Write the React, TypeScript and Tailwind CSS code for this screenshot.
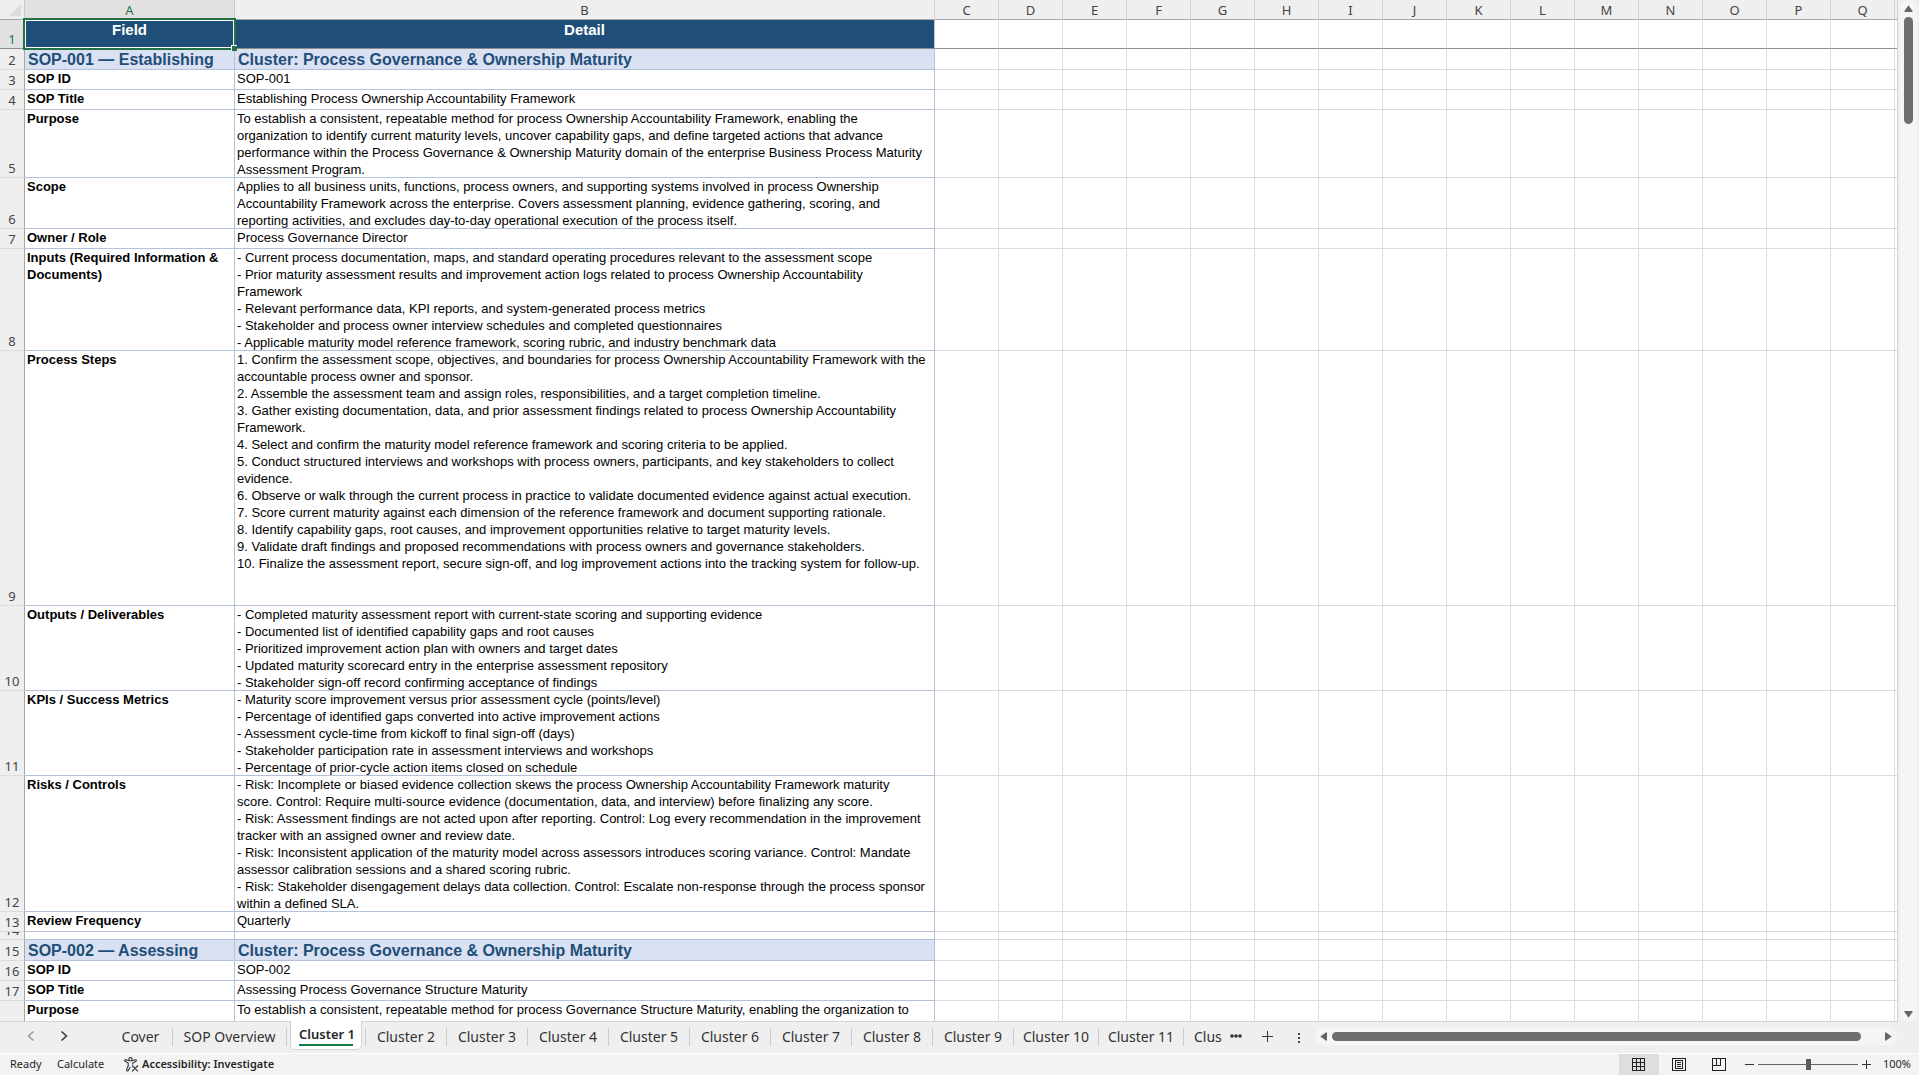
import { clsx } from "clsx";
import { Fragment } from "react";

type Row = {
  n: number;
  height: string;
  field: string;
  detail: string[];
  kind?: "head" | "title";
};

const columns = ["C", "D", "E", "F", "G", "H", "I", "J", "K", "L", "M", "N", "O", "P", "Q"];

const rows: Row[] = [
  { n: 1, height: "h-[29px]", field: "Field", detail: ["Detail"], kind: "head" },
  {
    n: 2,
    height: "h-[21px]",
    field: "SOP-001 — Establishing",
    detail: ["Cluster: Process Governance & Ownership Maturity"],
    kind: "title",
  },
  { n: 3, height: "h-[20px]", field: "SOP ID", detail: ["SOP-001"] },
  {
    n: 4,
    height: "h-[20px]",
    field: "SOP Title",
    detail: ["Establishing Process Ownership Accountability Framework"],
  },
  {
    n: 5,
    height: "h-[68px]",
    field: "Purpose",
    detail: [
      "To establish a consistent, repeatable method for process Ownership Accountability Framework, enabling the",
      "organization to identify current maturity levels, uncover capability gaps, and define targeted actions that advance",
      "performance within the Process Governance & Ownership Maturity domain of the enterprise Business Process Maturity",
      "Assessment Program.",
    ],
  },
  {
    n: 6,
    height: "h-[51px]",
    field: "Scope",
    detail: [
      "Applies to all business units, functions, process owners, and supporting systems involved in process Ownership",
      "Accountability Framework across the enterprise. Covers assessment planning, evidence gathering, scoring, and",
      "reporting activities, and excludes day-to-day operational execution of the process itself.",
    ],
  },
  { n: 7, height: "h-[20px]", field: "Owner / Role", detail: ["Process Governance Director"] },
  {
    n: 8,
    height: "h-[102px]",
    field: "Inputs (Required Information & Documents)",
    detail: [
      "- Current process documentation, maps, and standard operating procedures relevant to the assessment scope",
      "- Prior maturity assessment results and improvement action logs related to process Ownership Accountability",
      "Framework",
      "- Relevant performance data, KPI reports, and system-generated process metrics",
      "- Stakeholder and process owner interview schedules and completed questionnaires",
      "- Applicable maturity model reference framework, scoring rubric, and industry benchmark data",
    ],
  },
  {
    n: 9,
    height: "h-[255px]",
    field: "Process Steps",
    detail: [
      "1. Confirm the assessment scope, objectives, and boundaries for process Ownership Accountability Framework with the",
      "accountable process owner and sponsor.",
      "2. Assemble the assessment team and assign roles, responsibilities, and a target completion timeline.",
      "3. Gather existing documentation, data, and prior assessment findings related to process Ownership Accountability",
      "Framework.",
      "4. Select and confirm the maturity model reference framework and scoring criteria to be applied.",
      "5. Conduct structured interviews and workshops with process owners, participants, and key stakeholders to collect",
      "evidence.",
      "6. Observe or walk through the current process in practice to validate documented evidence against actual execution.",
      "7. Score current maturity against each dimension of the reference framework and document supporting rationale.",
      "8. Identify capability gaps, root causes, and improvement opportunities relative to target maturity levels.",
      "9. Validate draft findings and proposed recommendations with process owners and governance stakeholders.",
      "10. Finalize the assessment report, secure sign-off, and log improvement actions into the tracking system for follow-up.",
    ],
  },
  {
    n: 10,
    height: "h-[85px]",
    field: "Outputs / Deliverables",
    detail: [
      "- Completed maturity assessment report with current-state scoring and supporting evidence",
      "- Documented list of identified capability gaps and root causes",
      "- Prioritized improvement action plan with owners and target dates",
      "- Updated maturity scorecard entry in the enterprise assessment repository",
      "- Stakeholder sign-off record confirming acceptance of findings",
    ],
  },
  {
    n: 11,
    height: "h-[85px]",
    field: "KPIs / Success Metrics",
    detail: [
      "- Maturity score improvement versus prior assessment cycle (points/level)",
      "- Percentage of identified gaps converted into active improvement actions",
      "- Assessment cycle-time from kickoff to final sign-off (days)",
      "- Stakeholder participation rate in assessment interviews and workshops",
      "- Percentage of prior-cycle action items closed on schedule",
    ],
  },
  {
    n: 12,
    height: "h-[136px]",
    field: "Risks / Controls",
    detail: [
      "- Risk: Incomplete or biased evidence collection skews the process Ownership Accountability Framework maturity",
      "score. Control: Require multi-source evidence (documentation, data, and interview) before finalizing any score.",
      "- Risk: Assessment findings are not acted upon after reporting. Control: Log every recommendation in the improvement",
      "tracker with an assigned owner and review date.",
      "- Risk: Inconsistent application of the maturity model across assessors introduces scoring variance. Control: Mandate",
      "assessor calibration sessions and a shared scoring rubric.",
      "- Risk: Stakeholder disengagement delays data collection. Control: Escalate non-response through the process sponsor",
      "within a defined SLA.",
    ],
  },
  { n: 13, height: "h-[20px]", field: "Review Frequency", detail: ["Quarterly"] },
  { n: 14, height: "h-[8px]", field: "", detail: [] },
  {
    n: 15,
    height: "h-[21px]",
    field: "SOP-002 — Assessing",
    detail: ["Cluster: Process Governance & Ownership Maturity"],
    kind: "title",
  },
  { n: 16, height: "h-[20px]", field: "SOP ID", detail: ["SOP-002"] },
  {
    n: 17,
    height: "h-[20px]",
    field: "SOP Title",
    detail: ["Assessing Process Governance Structure Maturity"],
  },
  {
    n: 18,
    height: "h-[68px]",
    field: "Purpose",
    detail: [
      "To establish a consistent, repeatable method for process Governance Structure Maturity, enabling the organization to",
    ],
  },
];

const sheets = [
  "Cover",
  "SOP Overview",
  "Cluster 1",
  "Cluster 2",
  "Cluster 3",
  "Cluster 4",
  "Cluster 5",
  "Cluster 6",
  "Cluster 7",
  "Cluster 8",
  "Cluster 9",
  "Cluster 10",
  "Cluster 11",
];

function SheetRow({ row }: { row: Row }) {
  const head = row.kind === "head";
  const title = row.kind === "title";
  const cell = clsx(
    "border-r border-b p-0 align-top",
    head && "border-b-[#8c8c8c] bg-[#1f4e78] text-center text-[15px] font-bold leading-[20px] text-white",
    title && "border-[#b4c1dc] bg-[#d9e1f2] text-left text-base font-bold leading-[22px] text-[#1f4e78]",
    !row.kind && "border-[#b4c1dc] text-left text-[13px] leading-[17px] text-black"
  );
  // the last text line may touch the rule below it, so it gives back its border pixels
  const inner = clsx(title ? "-mb-[2px] px-[3px]" : "-mb-px px-[2px]");

  return (
    <tr className={row.height}>
      <th
        scope="row"
        className={clsx(
          "border-r border-r-[#a6a6a6] border-b p-0 align-bottom text-[13px] font-normal",
          head ? "border-b-[#8c8c8c] bg-[#e1e1e1] text-[#217346]" : "border-b-[#dcdcdc] bg-[#efefef] text-[#444444]"
        )}
      >
        {row.n === 14 ? (
          <div className="flex h-[7px] items-end justify-center overflow-hidden leading-[18px]">14</div>
        ) : (
          row.n < 18 && <div className="leading-[18px]">{row.n}</div>
        )}
      </th>
      <td className={clsx(cell, head && "relative border-r-[#1f4e78]")}>
        <div className={clsx(inner, row.kind ? "whitespace-nowrap" : "font-bold")}>{row.field}</div>
        {head && (
          <>
            <div className="absolute -inset-[2px] z-10 border-2 border-[#217346]" />
            <div className="absolute inset-0 z-10 border border-white" />
            <div className="absolute -right-[3px] -bottom-[3px] z-20 size-[6px] border-t border-l border-white bg-[#217346]" />
          </>
        )}
      </td>
      <td className={clsx(cell, head && "border-r-[#b4c1dc]")}>
        <div className={clsx(inner, "whitespace-nowrap")}>
          {row.detail.map((line) => (
            <div key={line}>{line}</div>
          ))}
        </div>
      </td>
      {columns.map((c) => (
        <td key={c} className={clsx("border-r border-b border-[#dcdcdc]", head && "border-b-[#8c8c8c]")} />
      ))}
      <td className={clsx("border-b border-[#dcdcdc]", head && "border-b-[#8c8c8c]")} />
    </tr>
  );
}

function Triangle({ className }: { className?: string }) {
  return (
    <svg viewBox="0 0 9 7" className={clsx("h-[7px] w-[9px] shrink-0", className)} fill="#666666">
      <path d="M4.5 0.3 8.7 6.2Q8.8 7 8 7H1Q0.2 7 0.3 6.2Z" />
    </svg>
  );
}

function VerticalScroll() {
  return (
    <div className="flex w-[21px] shrink-0 flex-col items-center bg-[#efefef]">
      <div className="flex min-h-0 w-[17px] flex-1 flex-col items-center rounded-full bg-[#f5f5f5] pt-[5px] pb-[4px]">
        <Triangle />
        <div className="mt-[5px] h-[107px] w-[9px] rounded-full bg-[#6e6e6e]" />
        <Triangle className="mt-auto rotate-180" />
      </div>
    </div>
  );
}

function TabDivider() {
  return <span className="mt-[6px] h-[18px] w-px bg-[#cccccc]" />;
}

function SheetTabs() {
  return (
    <div className="flex h-[31px] shrink-0 bg-[#efefef] text-sm text-[#333333]">
      <div className="flex items-center gap-[25px] pr-[41px] pb-[3px] pl-[27px]">
        <button aria-label="Previous sheets">
          <svg viewBox="0 0 8 12" className="h-3 w-2" fill="none" stroke="#9a9a9a" strokeWidth="1.5">
            <path d="M6.5 1.5 1.5 6 6.5 10.5" />
          </svg>
        </button>
        <button aria-label="Next sheets">
          <svg viewBox="0 0 8 12" className="h-3 w-2" fill="none" stroke="#333333" strokeWidth="1.5">
            <path d="M1.5 1.5 6.5 6 1.5 10.5" />
          </svg>
        </button>
      </div>
      <nav className="flex">
        {sheets.map((name) => (
          <Fragment key={name}>
            {name === "Cluster 1" ? (
              <button className="relative mx-[3px] -mt-px h-[29px] w-[72px] rounded-b-[5px] border border-t-0 border-[#d2d2d2] bg-white px-[8px]">
                <span className="block border-b-2 border-[#107c41] text-[13px] leading-[20px] font-semibold whitespace-nowrap text-[#262626]">
                  {name}
                </span>
              </button>
            ) : (
              <button
                className={clsx(
                  "flex items-center justify-center pb-[2px] whitespace-nowrap",
                  name === "Cover" && "w-[63px]",
                  name === "SOP Overview" && "w-[113px]",
                  /Cluster \d$/.test(name) && "w-[80px]",
                  /Cluster \d\d$/.test(name) && "w-[84px]"
                )}
              >
                {name}
              </button>
            )}
            <TabDivider />
          </Fragment>
        ))}
        <button className="w-[39px] overflow-hidden pb-[2px] pl-[10px] text-left whitespace-nowrap">Clus</button>
      </nav>
      <button aria-label="More sheets" className="flex w-[29px] items-center pb-[4px] pl-[7px]">
        <svg viewBox="0 0 12 4" className="h-1 w-3" fill="#333333">
          <circle cx="2" cy="2" r="1.8" />
          <circle cx="6" cy="2" r="1.8" />
          <circle cx="10" cy="2" r="1.8" />
        </svg>
      </button>
      <button aria-label="New sheet" className="flex w-[31px] items-center pb-[2px] pl-[10px]">
        <svg viewBox="0 0 11 11" className="size-[11px]" stroke="#333333">
          <path d="M5.5 0V11M0 5.5H11" />
        </svg>
      </button>
    </div>
  );
}

function HorizontalScroll() {
  return (
    <div className="flex min-w-0 flex-1 bg-[#efefef] pt-[6px] pr-[22px] pb-[8px]">
      <svg viewBox="0 0 2 10" className="mt-[5px] mr-[15px] ml-[15px] h-[10px] w-[2px] shrink-0" fill="#444444">
        <path d="M0 0h2v2H0zM0 4h2v2H0zM0 8h2v2H0z" />
      </svg>
      <div className="flex min-w-0 flex-1 items-center rounded-full bg-[#f5f5f5] px-[4px]">
        <Triangle className="-rotate-90" />
        <div className="mr-[23px] ml-[4px] h-[9px] flex-1 rounded-full bg-[#6e6e6e]" />
        <Triangle className="rotate-90" />
      </div>
    </div>
  );
}

function StatusBar() {
  return (
    <footer className="flex h-[22px] shrink-0 items-center border-t border-white bg-[#f3f3f3] text-[11px] text-[#262626]">
      <span className="w-[57px] pl-[10px]">Ready</span>
      <span className="w-[67px]">Calculate</span>
      <button className="flex items-center gap-[3px] font-semibold">
        <svg viewBox="0 0 15 15" className="size-[15px]" fill="none" stroke="#333333" strokeWidth="1.1">
          <circle cx="6.5" cy="2.3" r="1.7" />
          <path d="M4.8 3.8 2 2.8Q.5 2.6.7 3.9L4.2 6V9L2.5 12.8Q2.6 14.4 4 13.8L6.3 10M8.2 3.8 11 2.8Q12.6 2.6 12.3 3.9L8.8 6V7.5M8 8.5 14 14.3M14 8.5 8 14.3" />
        </svg>
        Accessibility: Investigate
      </button>
      <div className="ml-auto flex h-full items-center">
        <button aria-label="Normal view" className="flex h-full w-10 items-center justify-center bg-[#dedede]">
          <svg viewBox="0 0 14 13" className="h-[13px] w-[14px]" fill="none" stroke="#222222" shapeRendering="crispEdges">
            <path d="M.5 .5H12.5V12.5H.5ZM4.5 .5V12.5M8.5 .5V12.5M.5 4.5H12.5M.5 8.5H12.5" />
          </svg>
        </button>
        <button aria-label="Page layout view" className="flex h-full w-10 items-center justify-center">
          <svg viewBox="0 0 14 13" className="h-[13px] w-[14px]" fill="none" stroke="#222222" shapeRendering="crispEdges">
            <path d="M.5 .5H13.5V12.5H.5ZM3.5 2.5H10.5V10.5H3.5ZM5 4.5H9M5 6.5H9M5 8.5H9" />
          </svg>
        </button>
        <button aria-label="Page break preview" className="flex h-full w-10 items-center justify-center">
          <svg viewBox="0 0 14 13" className="h-[13px] w-[14px]" fill="none" stroke="#222222" shapeRendering="crispEdges">
            <path d="M.5 .5H13.5V12.5H.5ZM.5 7.5H8.5V.5M4.5 .5V7.5" />
          </svg>
        </button>
        <button aria-label="Zoom out" className="ml-[6px]">
          <svg viewBox="0 0 9 9" className="size-[9px]" stroke="#333333">
            <path d="M0 4.5H9" />
          </svg>
        </button>
        <label className="relative mx-[4px] flex items-center">
          <span className="sr-only">Zoom</span>
          <input
            type="range"
            min="10"
            max="190"
            defaultValue="100"
            className="h-[11px] w-[100px] appearance-none bg-[linear-gradient(#666,#666)] bg-[length:100%_1px] bg-center bg-no-repeat [&::-webkit-slider-thumb]:h-[11px] [&::-webkit-slider-thumb]:w-[5px] [&::-webkit-slider-thumb]:appearance-none [&::-webkit-slider-thumb]:bg-[#5c5c5c]"
          />
        </label>
        <button aria-label="Zoom in">
          <svg viewBox="0 0 9 9" className="size-[9px]" stroke="#333333">
            <path d="M0 4.5H9M4.5 0V9" />
          </svg>
        </button>
        <button className="w-[48px] pr-[8px] text-right">100%</button>
      </div>
    </footer>
  );
}

export default function App() {
  return (
    <div className="flex h-screen flex-col overflow-hidden bg-[#efefef] font-['Noto_Sans','Open_Sans',sans-serif]">
      <main className="flex min-h-0 flex-1">
        <div className="min-w-0 flex-1 overflow-hidden border-r border-b border-[#d4d4d4] bg-white">
          <table className="w-full table-fixed border-separate border-spacing-0">
            <colgroup>
              <col className="w-[25px]" />
              <col className="w-[210px]" />
              <col className="w-[700px]" />
              {columns.map((c) => (
                <col key={c} className="w-16" />
              ))}
              <col />
            </colgroup>
            <thead>
              <tr className="h-[20px] bg-[#efefef] text-[13px] leading-[17px] text-[#444444] [&>th]:align-bottom">
                <th className="border-r border-b border-r-[#c8c8c8] border-b-[#a6a6a6] p-0">
                  <svg viewBox="0 0 12 12" className="mb-[3px] ml-[9px] size-3" fill="#dcdcdc">
                    <path d="M12 0V12H0Z" />
                  </svg>
                </th>
                <th className="border-r border-b border-r-[#c8c8c8] border-b-[#a6a6a6] bg-[#e1e1e1] p-0 font-normal text-[#217346]">
                  A
                </th>
                {["B", ...columns].map((c) => (
                  <th key={c} className="border-r border-b border-r-[#d4d4d4] border-b-[#a6a6a6] p-0 font-normal">
                    {c}
                  </th>
                ))}
                <th className="border-b border-[#a6a6a6] p-0" />
              </tr>
            </thead>
            <tbody className="[&_td]:font-['Liberation_Sans',Arial,sans-serif]">
              {rows.map((row) => (
                <SheetRow key={row.n} row={row} />
              ))}
            </tbody>
          </table>
        </div>
        <VerticalScroll />
      </main>
      <div className="flex">
        <SheetTabs />
        <HorizontalScroll />
      </div>
      <StatusBar />
    </div>
  );
}
